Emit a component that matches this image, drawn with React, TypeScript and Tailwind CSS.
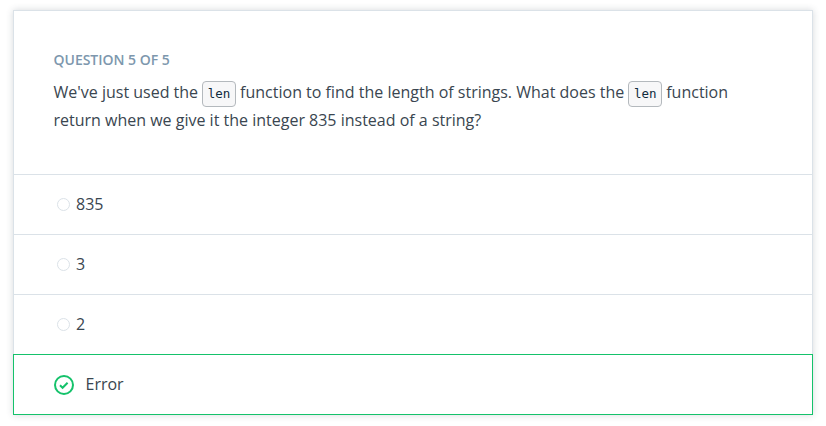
const options = ["835", "3", "2"];

function Code({ children }: { children: string }) {
  return (
    <code className="my-[-2px] inline-block h-[26px] w-[33.7px] rounded-[4px] border border-[#b4b9bd] bg-[#f7f7f8] text-center align-middle font-['DejaVu_Sans_Mono',monospace] text-[12.5px] leading-[24px] text-[#0f2b3d]">
      {children}
    </code>
  );
}

export default function App() {
  return (
    <div className="h-[426px] bg-white pl-[13px] pt-[10px] font-['Open_Sans',sans-serif] text-[#3a4650]">
      <main className="flex h-[405px] w-[800px] flex-col border border-[#dbe2e8] shadow-[0_0_7px_rgba(46,61,73,0.2)]">
        <section className="h-[163px] shrink-0 pl-[39.5px] pt-[39px]">
          <h1 className="text-[14px] font-semibold leading-5 tracking-[-0.02px] text-[#7d97ad]">QUESTION 5 OF 5</h1>
          <p className="mt-[8px] text-[16px] leading-7">
            We've just used the <Code>len</Code> function to find the length of strings. What does the <Code>len</Code> function<br />
            return when we give it the integer 835 instead of a string?
          </p>
        </section>
        {options.map((option) => (
          <label key={option} className="flex h-[60px] shrink-0 items-center border-t border-[#dbe2e8] pl-[43px] text-[16px]">
            <span className="mr-[6px] size-[13px] rounded-full border border-[#dbe2e8]" />
            <span className="pb-[2px]">{option}</span>
          </label>
        ))}
        <label className="-mx-px -mb-px flex h-[61px] shrink-0 items-center border border-[#15c26b] pl-10 text-[16px]">
          <svg className="mr-[11.5px] size-[20px]" viewBox="0 0 20 20" fill="none" stroke="#15c26b" strokeWidth="2">
            <circle cx="10" cy="10" r="9" />
            <path d="m6 10.3 2.6 2.5 5-5" />
          </svg>
          <span className="pb-[2px]">Error</span>
        </label>
      </main>
    </div>
  );
}
